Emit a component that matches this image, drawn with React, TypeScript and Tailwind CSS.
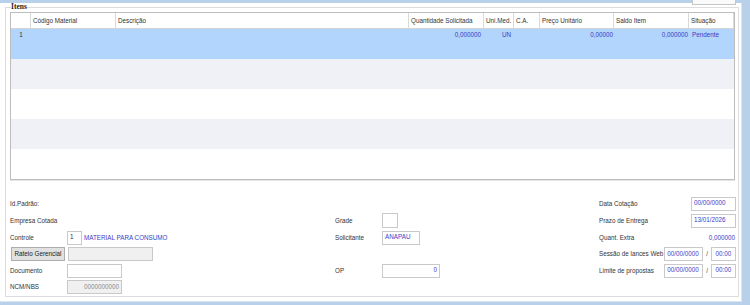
import clsx from "clsx";

const blue = "text-[#3c3cc6]";

const columns = [
  { label: "", w: "w-[20px]" },
  { label: "Código Material", w: "w-[85px]" },
  { label: "Descrição", w: "w-[293px]" },
  { label: "Quantidade Solicitada", w: "w-[75px]" },
  { label: "Uni.Med.", w: "w-[30px]" },
  { label: "C.A.", w: "w-[26px]" },
  { label: "Preço Unitário", w: "w-[74px]" },
  { label: "Saldo Item", w: "w-[75px]" },
  { label: "Situação", w: "flex-1" },
];

const emptyRows = ["bg-[#f0f0f7]", "bg-white", "bg-[#f0f0f7]", "bg-white"];

const Field = ({ className, children }: { className?: string; children?: React.ReactNode }) => (
  <div className={clsx("flex h-[14px] shrink-0 items-center border border-[#c9c9c9] bg-white px-[2px] leading-none", className)}>
    {children}
  </div>
);

const ItemsGrid = () => (
  <div className="mt-[1px] h-[168px] w-[725px] border border-[#bdbdbd] bg-white shadow-[0_1px_0_#e4e4e4]">
    <div className="flex h-[16px] border-b border-[#d4d4d4] text-[#333]">
      {columns.map((c) => (
        <div key={c.label} className={clsx("flex items-center border-r border-[#dadada] pl-[2px] whitespace-nowrap", c.w)}>
          {c.label}
        </div>
      ))}
    </div>
    <div className={clsx("flex h-[30px] bg-[#b1d5fc] pt-[2px] leading-[8px]", blue)}>
      <div className="w-[20px] text-center text-[#333]">1</div>
      <div className="w-[85px]" />
      <div className="w-[293px]" />
      <div className="w-[75px] pr-[3px] text-right">0,000000</div>
      <div className="w-[30px] pl-[18px]">UN</div>
      <div className="w-[26px]" />
      <div className="w-[74px] pr-[1px] text-right">0,00000</div>
      <div className="w-[75px] pr-[1px] text-right">0,000000</div>
      <div className="flex-1 pl-[3px]">Pendente</div>
    </div>
    {emptyRows.map((bg, i) => (
      <div key={i} className={clsx("h-[30px]", bg)} />
    ))}
  </div>
);

const rows = "grid grid-cols-[minmax(0,1fr)] grid-rows-[17px_17px_17px_16px_17px_16px]";

const Form = () => (
  <div className="mt-[15px] flex text-[#333]">
    <div className={clsx(rows, "w-[325px]")}>
      <div className="flex items-center">Id.Padrão:</div>
      <div className="flex items-center">Empresa Cotada</div>
      <div className="flex items-center">
        <span className="w-[57px]">Controle</span>
        <Field className="w-[15px] text-[#333]">1</Field>
        <span className={clsx("ml-[2px]", blue)}>MATERIAL PARA CONSUMO</span>
      </div>
      <div className="flex items-center">
        <button className="mr-[3px] ml-[1px] h-[14px] w-[54px] border border-[#adadad] bg-[#e1e1e1] leading-none text-[#222]">
          Rateio Gerencial
        </button>
        <Field className="w-[85px] bg-[#f0f0f0]!" />
      </div>
      <div className="flex items-center">
        <span className="w-[57px]">Documento</span>
        <Field className="w-[55px]" />
      </div>
      <div className="flex items-center">
        <span className="w-[57px]">NCM/NBS</span>
        <Field className="w-[55px] justify-end bg-[#f0f0f0]! text-[#8c8c8c]">0000000000</Field>
      </div>
    </div>

    <div className={clsx(rows, "w-[264px]")}>
      <div />
      <div className="flex items-center">
        <span className="w-[47px]">Grade</span>
        <Field className="h-[15px]! w-[16px]" />
      </div>
      <div className="flex items-center">
        <span className="w-[47px]">Solicitante</span>
        <Field className={clsx("w-[38px]", blue)}>ANAPAU</Field>
      </div>
      <div />
      <div className="flex items-center">
        <span className="w-[47px]">OP</span>
        <Field className={clsx("w-[58px] justify-end", blue)}>0</Field>
      </div>
      <div />
    </div>

    <div className={clsx(rows, "w-[137px]")}>
      <div className="flex items-center justify-between">
        <span>Data Cotação</span>
        <Field className={clsx("w-[45px]", blue)}>00/00/0000</Field>
      </div>
      <div className="flex items-center justify-between">
        <span>Prazo de Entrega</span>
        <Field className={clsx("w-[45px]", blue)}>13/01/2026</Field>
      </div>
      <div className="flex items-center justify-between">
        <span>Quant. Extra</span>
        <span className={clsx("pr-[1px]", blue)}>0,000000</span>
      </div>
      <div className="flex items-center">
        <span className="min-w-0 flex-1 whitespace-nowrap">Sessão de lances Web</span>
        <Field className={clsx("w-[39px]", blue)}>00/00/0000</Field>
        <span className="mx-[3px] text-[#444]">/</span>
        <Field className={clsx("w-[25px] justify-center", blue)}>00:00</Field>
      </div>
      <div className="flex items-center">
        <span className="min-w-0 flex-1 whitespace-nowrap">Limite de propostas</span>
        <Field className={clsx("w-[39px]", blue)}>00/00/0000</Field>
        <span className="mx-[3px] text-[#444]">/</span>
        <Field className={clsx("w-[25px] justify-center", blue)}>00:00</Field>
      </div>
      <div />
    </div>
  </div>
);

export default function App() {
  return (
    <div className="h-[305px] w-[750px] overflow-hidden bg-[#b8d0ea] font-['Liberation_Sans',Arial,sans-serif] text-[6.3px]">
      <div className="relative h-[299px] w-[742px] border-r border-b border-[#dbe5ef] bg-white">
        <div className="absolute top-[-12px] left-[692px] h-[14px] w-[44px] border border-[#c6c6c6] bg-[#fafafa]" />
        <fieldset className="mt-[3px] ml-[5px] h-[294px] w-[734px] border border-[#dcdcdc] pr-[2px] pl-[4px]">
          <legend className="ml-[1px] font-['Liberation_Serif',serif] text-[7.5px] leading-[8px] font-bold text-[#222]">
            Itens
          </legend>
          <ItemsGrid />
          <Form />
        </fieldset>
      </div>
    </div>
  );
}
